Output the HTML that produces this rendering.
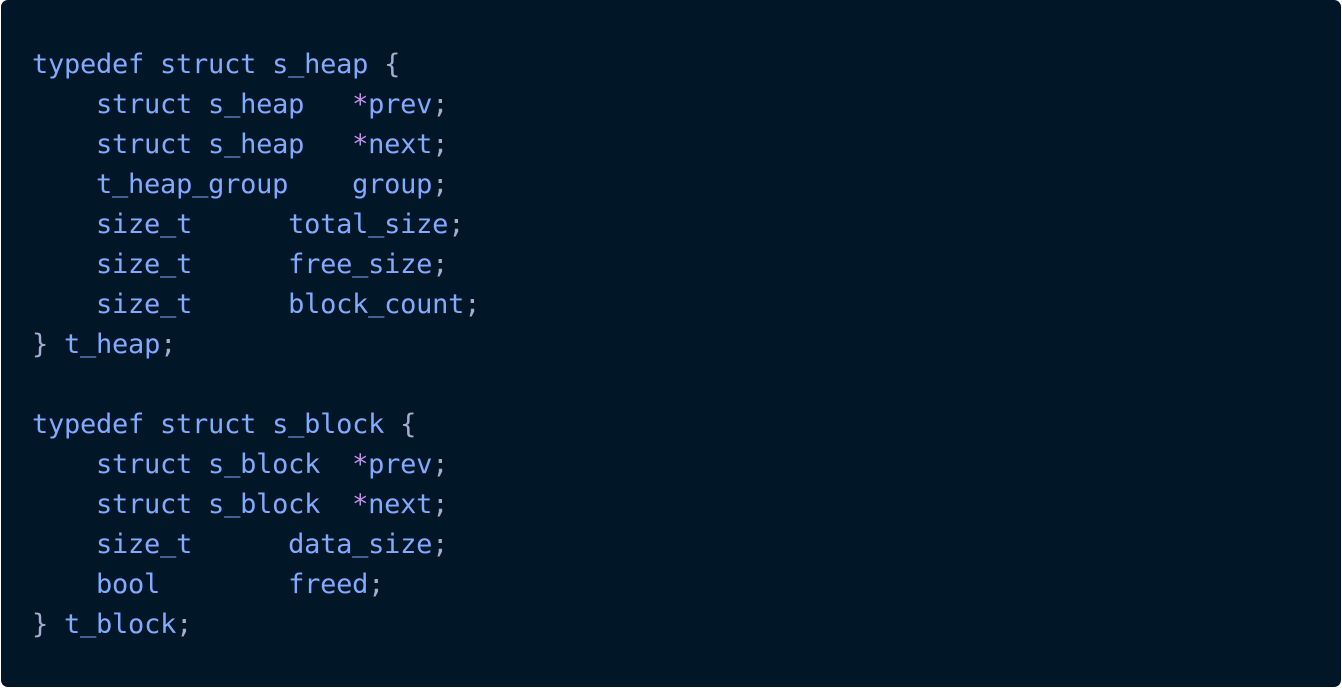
<!DOCTYPE html>
<html><head><style>
html,body{margin:0;padding:0;background:#fff;width:1342px;height:688px;overflow:hidden}
.box{position:absolute;left:1px;top:0;width:1340px;height:687px;background:#011627;border-radius:7px}
pre{position:absolute;left:31px;top:45px;margin:0;font-family:"DejaVu Sans Mono","Liberation Mono",monospace;font-size:27px;line-height:40px;color:#82aaff;letter-spacing:-0.25px}
.p{color:#a6accd}.s{color:#c792ea}
i{font-style:normal;position:relative;top:-2px}
</style></head><body><div class="box"><pre>typedef struct s<i>_</i>heap <span class="p">{</span>
    struct s<i>_</i>heap   <span class="s">*</span>prev<span class="p">;</span>
    struct s<i>_</i>heap   <span class="s">*</span>next<span class="p">;</span>
    t<i>_</i>heap<i>_</i>group    group<span class="p">;</span>
    size<i>_</i>t      total<i>_</i>size<span class="p">;</span>
    size<i>_</i>t      free<i>_</i>size<span class="p">;</span>
    size<i>_</i>t      block<i>_</i>count<span class="p">;</span>
<span class="p">}</span> t<i>_</i>heap<span class="p">;</span>

typedef struct s<i>_</i>block <span class="p">{</span>
    struct s<i>_</i>block  <span class="s">*</span>prev<span class="p">;</span>
    struct s<i>_</i>block  <span class="s">*</span>next<span class="p">;</span>
    size<i>_</i>t      data<i>_</i>size<span class="p">;</span>
    bool        freed<span class="p">;</span>
<span class="p">}</span> t<i>_</i>block<span class="p">;</span></pre></div></body></html>
